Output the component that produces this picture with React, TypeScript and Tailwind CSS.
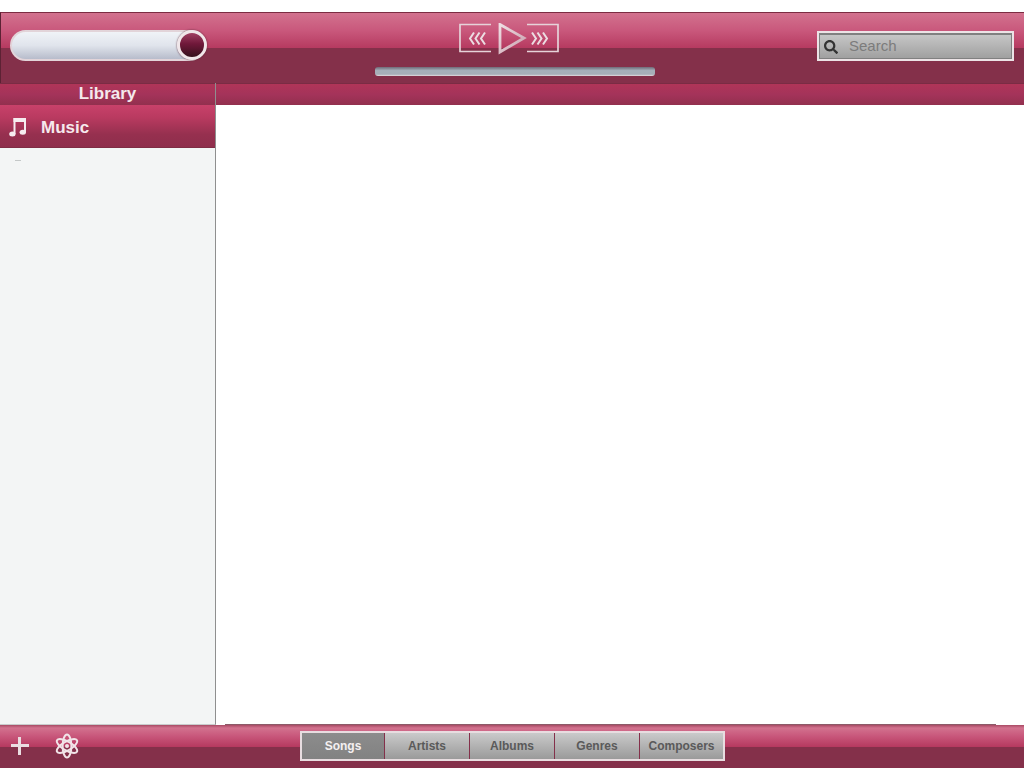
import { FaSearch } from "react-icons/fa";

const tabs = ["Songs", "Artists", "Albums", "Genres", "Composers"];

function Transport() {
  return (
    <svg width="100" height="32" viewBox="0 0 100 32" fill="none" className="block">
      <defs>
        <linearGradient id="tri" x1="0" y1="0" x2="1" y2="1">
          <stop offset="0" stopColor="#efdfe4" />
          <stop offset="1" stopColor="#c9a0ae" />
        </linearGradient>
      </defs>
      <path d="M32 1.5H1V28.5H32" stroke="#e6d3d9" strokeWidth="1.7" />
      <path d="M68 1.5H99V28.5H68" stroke="#e6d3d9" strokeWidth="1.7" />
      <path d="M41 1.5L65 15L41 29Z" stroke="url(#tri)" strokeWidth="2.8" strokeLinejoin="miter" />
      <g stroke="#ecdde2" strokeWidth="2">
        <path d="M15 9.5L11 15.5L15 21.5" />
        <path d="M20.5 9.5L16.5 15.5L20.5 21.5" />
        <path d="M26 9.5L22 15.5L26 21.5" />
        <path d="M73 9.5L77 15.5L73 21.5" />
        <path d="M78.5 9.5L82.5 15.5L78.5 21.5" />
        <path d="M84 9.5L88 15.5L84 21.5" />
      </g>
    </svg>
  );
}

function Note() {
  return (
    <svg width="18" height="20" viewBox="0 0 18 20" fill="none" className="block">
      <path d="M5.5 17V2H16V15" stroke="#f6ecef" strokeWidth="2" />
      <path d="M4.5 1H17V5H4.5Z" fill="#f6ecef" />
      <ellipse cx="3.4" cy="17" rx="3.2" ry="2.5" fill="#f6ecef" />
      <ellipse cx="13.8" cy="15.2" rx="3.2" ry="2.5" fill="#f6ecef" />
    </svg>
  );
}

function Atom() {
  return (
    <svg width="24" height="26" viewBox="0 0 24 26" fill="none" stroke="#f1e4e8" strokeWidth="2" className="block">
      <ellipse cx="12" cy="13" rx="4.4" ry="11.5" />
      <ellipse cx="12" cy="13" rx="4.4" ry="11.5" transform="rotate(60 12 13)" />
      <ellipse cx="12" cy="13" rx="4.4" ry="11.5" transform="rotate(-60 12 13)" />
      <circle cx="12" cy="13" r="2" fill="#f1e4e8" stroke="none" />
    </svg>
  );
}

export default function App() {
  return (
    <div className="w-[1024px] h-[768px] overflow-hidden flex flex-col bg-white font-['Liberation_Sans',Arial,sans-serif]">
      <div className="h-3 shrink-0 bg-white" />

      <header className="h-[71px] shrink-0 flex items-start border-t border-t-[#7c2c42] border-l border-l-[#5c2234] bg-[linear-gradient(to_bottom,#d2728e_0%,#c9587c_25%,#b63a60_50%,#84304a_50%,#84304a_100%)]">
        <div className="ml-[9px] mt-[17px] w-[197px] h-[31px] relative">
          <div className="w-[195px] h-[31px] rounded-full border-2 border-[#e2d4d9] bg-[linear-gradient(to_bottom,#f0f3f7,#e0e4ec_50%,#b7bccb)]" />
          <div className="absolute right-0 top-0 w-[30px] h-[30px] rounded-full border-[3px] border-[#f0e6e9] bg-[linear-gradient(to_bottom,#a03f62,#70183a_45%,#36101c)] shadow-[0_0_2px_#5a2a38]" />
        </div>
        <div className="ml-[168px] w-[280px] flex flex-col">
          <div className="ml-[84px] mt-[10px] w-[100px]">
            <Transport />
          </div>
          <div className="mt-[12px] h-[9px] rounded-[3px] bg-[linear-gradient(to_bottom,#6f6a78,#a6b0ba_40%,#a6aeb8_80%,#e6dde0)]" />
        </div>
        <div className="ml-[162px] mt-[18px] w-[197px] h-[30px] border-2 border-[#ece3e6]">
          <div className="w-full h-full flex items-center border border-[#808080] border-t-2 bg-[linear-gradient(to_bottom,#c6c6c6,#a0a0a0)]">
            <FaSearch size={14} color="#333333" className="ml-[4px]" />
            <span className="ml-[11px] mb-[2px] text-[15px] leading-none text-[#7c7c7c]">Search</span>
          </div>
        </div>
      </header>

      <div className="flex-1 flex min-h-0">
        <aside className="w-[216px] shrink-0 flex flex-col border-r border-r-[#8f8f8f] border-b border-b-[#c8cccc] bg-[#f3f5f5]">
          <div className="h-[22px] shrink-0 flex items-center justify-center pb-[2px] border-t border-t-[#7a2c44] bg-[linear-gradient(to_bottom,#b03558,#a4335a_50%,#92304e)] text-[17px] font-bold text-[#f4e9ec]">
            Library
          </div>
          <div className="h-[43px] shrink-0 flex items-center pt-[3px] bg-[linear-gradient(to_bottom,#c8416a,#b93a60_30%,#96304f_70%,#8f2e4c)] border-b border-b-[#7f2c44]">
            <div className="ml-[9px] mb-[2px]">
              <Note />
            </div>
            <span className="ml-[14px] text-[17px] font-bold text-[#f6e9ed]">Music</span>
          </div>
          <div className="ml-[15px] mt-[12px] w-[6px] h-px bg-[#c4c8c8]" />
        </aside>
        <main className="flex-1 flex flex-col bg-white">
          <div className="h-[22px] shrink-0 border-t border-t-[#7a2c44] bg-[linear-gradient(to_bottom,#b03558,#a4335a_50%,#92304e)]" />
          <div className="flex-1" />
          <div className="ml-[9px] mr-[28px] h-px bg-[#8c5a68]" />
        </main>
      </div>

      <footer className="h-[43px] shrink-0 flex items-start bg-[linear-gradient(to_bottom,#a84a64_0,#d2728e_3px,#c9587c_25%,#b63a60_50%,#84304a_50%,#84304a_100%)]">
        <div className="ml-[11px] mt-[19px] w-[18px] h-[3px] bg-[#eadde1] relative">
          <div className="absolute left-[7px] top-[-7px] w-[3px] h-[18px] bg-[#eadde1]" />
        </div>
        <div className="ml-[26px] mt-[8px]">
          <Atom />
        </div>
        <div className="ml-[221px] mt-[6px] flex h-[30px] w-[425px] border-2 border-[#e8dde0]">
          {tabs.map((t, i) => (
            <div
              key={t}
              className={
                i === 0
                  ? "w-[83px] h-full flex items-center justify-center text-[12px] font-bold text-[#f4f0f1] border-r border-r-[#84304a] bg-[linear-gradient(to_bottom,#8c8c8c,#828282)]"
                  : i === 4
                    ? "flex-1 h-full flex items-center justify-center text-[12px] font-bold text-[#5a5a5a] bg-[linear-gradient(to_bottom,#cacaca,#9a9a9a)]"
                    : "w-[85px] h-full flex items-center justify-center text-[12px] font-bold text-[#5a5a5a] border-r border-r-[#84304a] bg-[linear-gradient(to_bottom,#cacaca,#9a9a9a)]"
              }
            >
              {t}
            </div>
          ))}
        </div>
      </footer>
    </div>
  );
}
